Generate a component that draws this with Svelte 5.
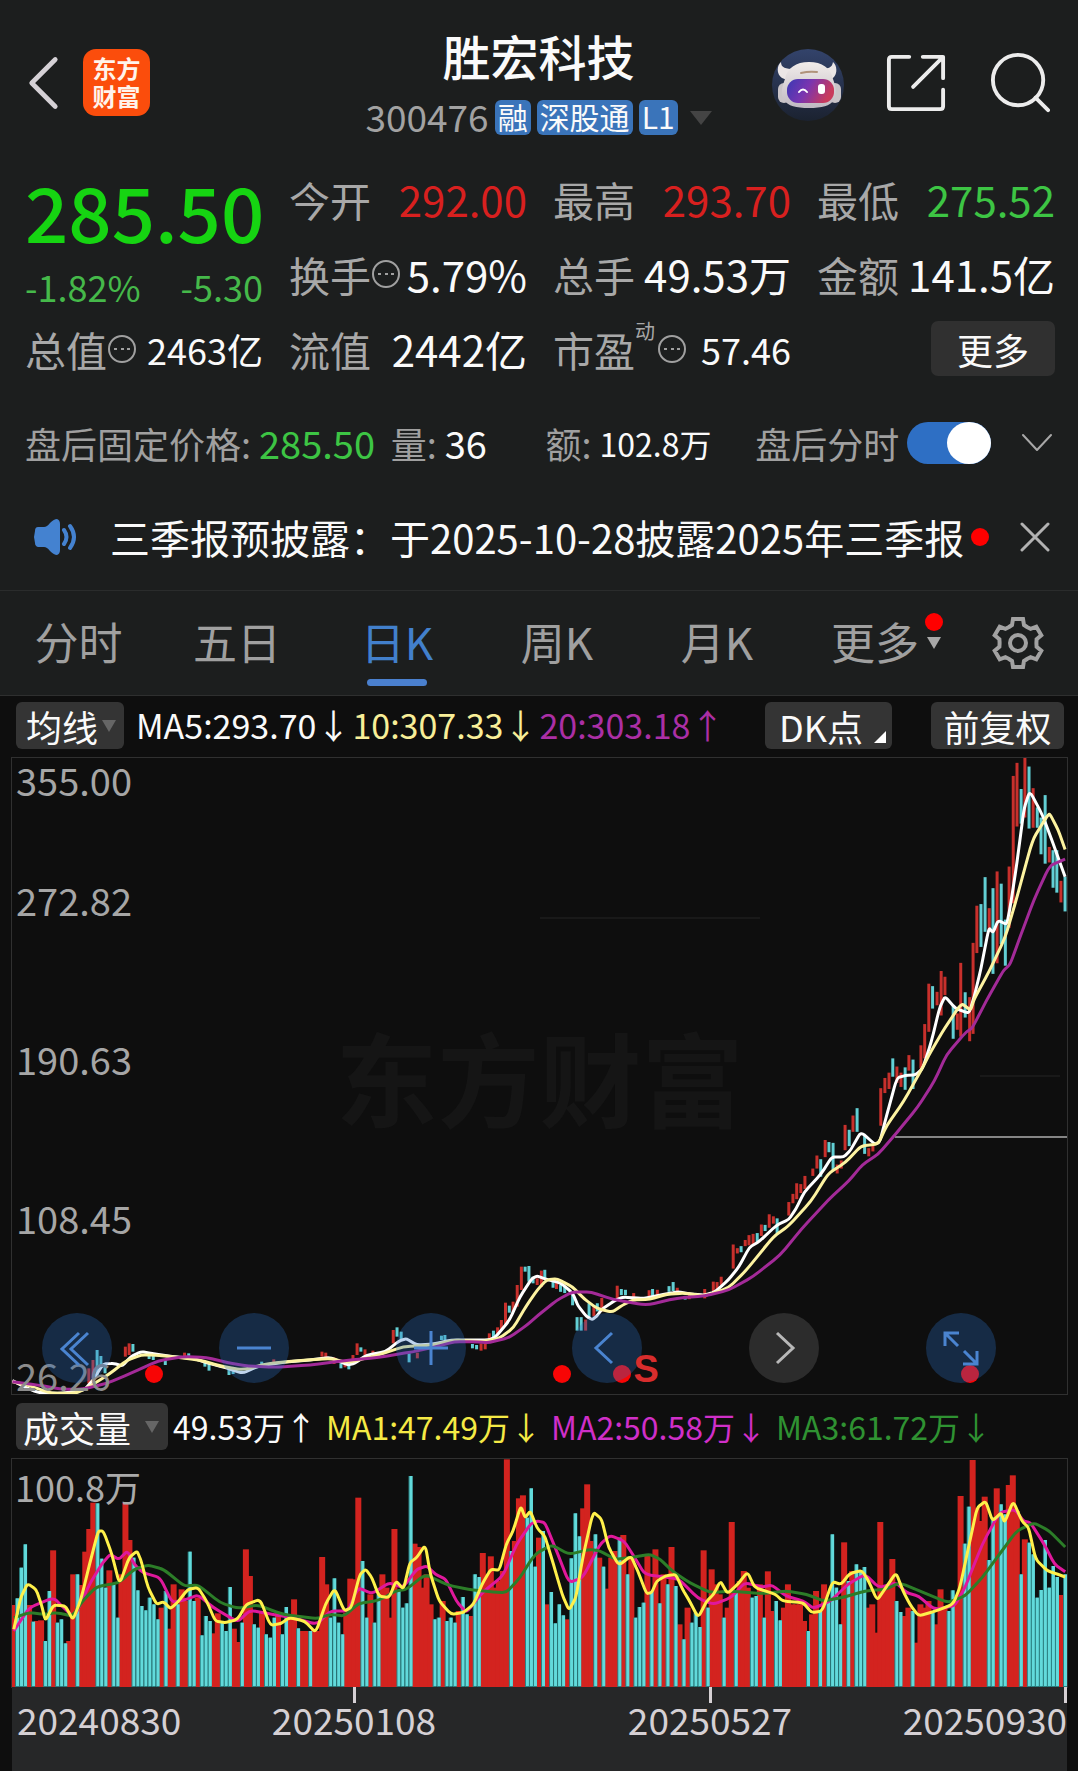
<script>
  let afterHours = $state(true);
  let period = $state('日K');

  const quotes = [
    { label: '今开', value: '292.00', tone: 'up' },
    { label: '最高', value: '293.70', tone: 'up' },
    { label: '最低', value: '275.52', tone: 'down' },
    { label: '换手', value: '5.79%', info: true },
    { label: '总手', value: '49.53万' },
    { label: '金额', value: '141.5亿' },
    { label: '总值', value: '2463亿', info: true, small: true },
    { label: '流值', value: '2442亿' },
    { label: '市盈', value: '57.46', sup: '动', info: true, small: true }
  ];

  const periods = ['分时', '五日', '日K', '周K', '月K'];
  const priceTicks = ['272.82', '190.63', '108.45', '26.26'];
  const dates = ['20240830', '20250108', '20250527', '20250930'];
  const eventDots = [154, 562, 622, 970];

  // Candles: x, high, low, direction
  const leftCandles = '258,385,430,r 270,360,415,r 282,330,405,c 293,348,375,c 305,370,400,c 364,320,350,r 375,310,345,r 386,312,335,c 433,345,357,c 445,345,360,c 480,360,375,c 536,338,350,r 548,340,350,c 595,365,380,c 607,370,392,c 665,385,405,c 677,390,402,c 760,365,375,c 795,358,368,r 935,335,350,r 946,338,352,r 970,352,372,r 990,370,385,c 1002,370,382,r 1013,370,388,c 1025,345,370,r 1037,310,345,r 1048,322,335,c 1060,328,345,r 1083,332,345,r 1142,270,310,r 1153,262,290,c 1165,275,300,c 1188,340,367,c 1212,338,355,r 1282,287,300,c 1292,285,300,c 1372,312,325,c 1384,315,328,c 1397,310,332,r 1409,305,328,r 1421,280,300,r 1433,272,292,c 1445,262,285,r 1456,240,270,r 1468,188,255,r 1479,197,218,c 1490,185,215,r 1502,135,200,r 1514,80,150,r 1525,80,95,c 1536,78,125,c 1548,110,130,c 1560,115,135,r';
  const rightCandles = '4,1300,1340,r 14,1298,1318,c 38,1320,1342,c 48,1330,1345,r 60,1335,1352,c 72,1340,1355,c 95,1355,1385,c 108,1414,1447,c 120,1414,1447,c 133,1420,1447,r 143,1380,1415,c 157,1385,1412,r 167,1380,1400,c 180,1367,1400,r 225,1337,1372,r 237,1345,1360,c 249,1347,1360,c 273,1355,1367,r 318,1348,1365,r 328,1345,1362,c 342,1347,1360,r 376,1338,1352,c 388,1328,1350,c 400,1342,1355,r 423,1362,1371,c 435,1355,1370,r 480,1345,1368,r 505,1327,1350,r 516,1328,1345,r 528,1315,1335,r 563,1236,1295,r 575,1245,1258,r 586,1240,1255,c 598,1225,1240,r 609,1213,1238,r 621,1210,1235,r 633,1208,1230,c 645,1187,1215,r 656,1188,1203,c 668,1162,1195,r 680,1167,1185,r 691,1172,1210,c 725,1132,1165,r 737,1112,1135,r 748,1086,1125,r 760,1088,1110,r 772,1068,1100,r 795,1050,1068,r 807,1018,1050,r 818,1027,1070,c 831,980,1022,r 842,985,1010,c 854,987,1055,c 866,1040,1062,r 878,1030,1050,r 889,943,1005,r 901,955,995,c 912,920,960,r 924,902,960,c 946,970,1014,c 958,1000,1020,r 970,990,1008,r 993,853,945,r 1005,828,865,r 1017,815,855,r 1028,780,825,c 1040,800,840,r 1052,815,850,r 1064,802,857,c 1075,772,810,r 1087,783,855,c 1110,748,805,r 1121,696,780,r 1133,597,715,r 1144,603,658,c 1157,617,650,r 1169,566,675,r 1180,580,625,r 1204,650,732,c 1216,670,710,r 1226,546,727,r 1239,618,680,c 1252,630,738,r 1262,497,720,r 1273,406,522,r 1285,402,507,c 1297,336,470,c 1309,412,470,r 1320,363,573,c 1332,322,547,r 1344,352,500,c 1356,440,553,c 1367,310,460,r 1379,88,400,r 1390,56,212,r 1402,120,205,c 1413,44,190,r 1425,65,217,c 1437,118,215,r 1449,165,215,c 1460,190,280,c 1472,135,303,c 1484,262,300,r 1495,270,362,c 1506,270,374,c 1518,345,398,r 1530,335,420,c';

  const toPoints = (text, ox, oy, sx, sy) =>
    text.split(' ').map((pair) => {
      const [x, y, low, dir] = pair.split(',');
      return { x: ox + x * sx, y: oy + y * sy, low: oy + low * sy, dir };
    });

  const L = [0, 1240, 1 / 2.904, 1 / 3];
  const R = [540, 740, 1 / 2.914, 1 / 2.45];
  const VL = [0, 1440, 1 / 2.904, 1 / 3];
  const VR = [538, 1440, 1 / 2.904, 1 / 3];

  const candles = [...toPoints(leftCandles, ...L), ...toPoints(rightCandles, ...R)];

  // Polyline with slightly rounded corners
  function curve(points) {
    let d = `M${points[0].x.toFixed(1)} ${points[0].y.toFixed(1)}`;
    for (let i = 1; i < points.length - 1; i++) {
      const p = points[i];
      const n = points[i + 1];
      const a = points[i - 1];
      const bx = p.x + (a.x - p.x) * 0.25;
      const by = p.y + (a.y - p.y) * 0.25;
      const cx = p.x + (n.x - p.x) * 0.25;
      const cy = p.y + (n.y - p.y) * 0.25;
      d += `L${bx.toFixed(1)} ${by.toFixed(1)}Q${p.x.toFixed(1)} ${p.y.toFixed(1)} ${cx.toFixed(1)} ${cy.toFixed(1)}`;
    }
    const e = points[points.length - 1];
    return d + `L${e.x.toFixed(1)} ${e.y.toFixed(1)}`;
  }
  const join = (a, A, b, B) => curve([...toPoints(a, ...A), ...toPoints(b, ...B)]);

  const ma5 = join(
    '36,422 70,440 110,458 180,460 245,450 270,420 300,372 330,370 355,378 380,350 410,335 440,340 500,350 560,355 600,368 660,385 705,400 750,378 830,366 900,360 960,352 1010,375 1030,370 1065,345 1120,335 1160,302 1180,296 1210,315 1260,312 1310,300 1370,300 1420,300 1440,290 1480,240 1510,170 1545,115 1560,108', L,
    '20,1322 60,1330 95,1355 110,1385 135,1412 152,1420 165,1412 180,1395 215,1375 240,1365 300,1368 350,1360 400,1352 440,1357 480,1360 510,1352 550,1322 580,1290 610,1243 640,1228 690,1188 725,1175 745,1150 770,1108 820,1062 850,1022 885,1022 905,1005 935,960 975,990 990,985 1010,920 1040,828 1065,822 1095,820 1115,805 1140,740 1165,655 1180,628 1210,657 1250,670 1265,630 1285,560 1308,460 1320,472 1335,442 1360,452 1370,410 1390,300 1410,170 1427,125 1465,185 1500,265 1530,335', R);
  const ma10 = join(
    '36,425 80,435 150,460 220,460 260,440 320,400 370,360 410,345 450,345 500,350 580,360 640,378 705,390 780,370 870,362 960,355 1010,368 1100,345 1170,320 1260,315 1320,300 1400,305 1450,295 1490,265 1530,195 1560,150', L,
    '20,1322 50,1320 95,1340 130,1370 165,1392 210,1402 240,1385 270,1372 320,1370 370,1358 420,1355 480,1362 550,1342 600,1300 680,1217 725,1190 790,1130 840,1062 890,1035 935,995 985,990 1010,945 1060,885 1110,810 1140,762 1180,705 1228,645 1255,662 1265,635 1310,565 1355,485 1385,400 1435,245 1475,190 1485,180 1510,220 1530,268', R);
  const ma20 = join(
    '36,425 110,435 180,448 240,448 310,430 380,400 460,362 530,350 600,352 660,368 720,378 800,382 900,375 1000,362 1100,352 1200,335 1260,322 1320,305 1380,305 1420,308 1480,292 1530,255 1560,228', L,
    '50,1372 95,1352 150,1353 210,1370 310,1385 400,1367 480,1362 550,1348 620,1315 700,1262 760,1200 840,1127 900,1080 940,1040 985,1015 1040,962 1100,900 1150,835 1185,770 1240,717 1260,705 1300,640 1350,565 1370,550 1400,480 1440,390 1485,308 1530,292', R);

  // Volume bars: direction letter followed by the bar top
  const volumes = (
    'r492 c472 c380 c310 r492 c542 r540 r538 c600 c450 r328 c545 c535 c607 r600 r400 c400 r432 r332 r264 r185 c187 c353 c440 r388 c430 c530 r400 r185 r297 c350 c448 c495 c508 c470 c490 c535 r500 c450 r563 r430 c490 r445 r480 c332 c480 r470 c583 c525 c540 r577 r517 c540 c570 c438 r563 r603 c545 r325 r405 c550 c560 r510 c580 c590 c530 r515 c580 c498 r530 r475 c562 r570 r570 c570 r565 r570 r348 r430 c530 c412 c545 c580 r515 r413 r415 r170 c360 c530 r460 c545 c460 r400 r440 r530 r264 c450 c500 c487 c105 r308 r318 r440 r400 r490 c535 c530 r480 c540 c530 c545 r510 c468 c520 r525 c400 c408 r336 r400 r346 r440 r420 r390 r55 c330 r300 r172 r163 c230 c142 c377 r290 ' +
    'c270 r490 c453 c547 c490 c523 r535 c352 c217 c286 r202 r130 r300 c280 r350 c377 r443 r350 r330 c290 r282 c400 r350 c530 c498 c485 r345 c450 r325 c487 r400 c430 r318 c435 r550 c595 r500 c545 c515 c558 r328 c500 r385 r430 r460 c530 r500 r243 c455 r420 r390 r440 c470 c465 r430 c530 r391 r510 c480 c538 r500 r430 r490 r490 r490 r540 c570 r520 r450 c510 r430 c480 c280 c440 c550 r304 c420 r390 c370 c390 c378 r500 r490 r575 r243 r440 r440 r354 c480 c513 r525 r500 c510 r605 r490 r500 r480 c515 r550 r445 r495 c510 c448 r480 r165 c308 c197 r57 r200 r240 r167 c357 c230 r142 c190 c220 r132 r103 r210 c400 r295 c305 c340 c470 c447 c297 c440 c375 c408 r462 c400'
  ).split(' ').map((v, i, all) => ({
    dir: v[0],
    x: 13 + (i * 1052) / (all.length - 1),
    y: 1440 + Number(v.slice(1)) / 3
  }));
  const rising = volumes.filter((v) => v.dir === 'r');
  const falling = volumes.filter((v) => v.dir === 'c');

  const vma1 = join(
    '40,565 60,470 80,428 105,445 120,490 132,540 155,492 190,495 212,537 235,475 260,370 285,270 300,270 325,340 347,430 375,350 398,330 410,360 430,440 455,490 475,482 495,503 515,485 545,445 575,440 600,480 625,540 655,545 690,535 715,490 755,475 785,553 815,548 840,530 885,540 917,575 945,490 972,442 1000,510 1020,500 1045,400 1062,385 1080,410 1100,465 1130,470 1150,420 1172,445 1190,365 1210,350 1235,312 1250,400 1275,480 1310,520 1345,515 1375,490 1400,430 1425,385 1450,388 1470,310 1490,270 1512,195 1525,230 1540,210 1560,262', VL,
    '20,285 45,370 70,460 90,508 110,470 130,350 160,212 185,235 205,320 235,373 270,345 290,390 315,458 330,455 345,420 370,405 400,400 420,445 440,480 465,530 490,480 510,460 530,420 550,458 580,430 608,393 630,440 690,460 710,480 770,485 795,515 825,510 855,422 880,430 905,398 940,388 960,420 985,478 1010,440 1040,395 1060,450 1080,490 1105,525 1155,510 1205,490 1225,440 1250,320 1275,200 1300,180 1320,240 1345,215 1355,245 1380,180 1405,240 1425,260 1445,355 1480,390 1510,400 1531,408', VR);
  const vma2 = join(
    '40,570 85,500 155,470 185,500 215,530 260,430 295,370 320,340 345,355 370,330 390,370 415,395 465,410 500,485 540,475 575,462 620,500 690,543 725,508 790,520 850,530 920,550 960,510 1010,510 1040,440 1080,458 1130,425 1170,440 1210,385 1240,375 1265,400 1295,415 1325,480 1355,515 1400,455 1460,405 1500,310 1540,250 1560,240', VL,
    '20,245 50,320 90,425 130,410 180,310 210,283 250,300 275,340 310,400 380,410 410,415 465,472 510,490 560,470 600,425 650,438 680,432 720,465 770,480 800,502 850,480 900,430 950,400 990,440 1040,425 1070,455 1105,465 1150,505 1210,495 1240,440 1290,310 1340,215 1385,205 1410,240 1430,245 1470,310 1500,370 1531,392', VR);
  const vma3 = join(
    '40,530 85,515 130,520 165,515 210,525 240,480 280,437 345,425 390,385 430,372 475,385 535,435 575,432 640,485 690,502 750,492 820,520 920,533 960,520 1000,525 1040,488 1100,478 1150,450 1180,445 1235,400 1300,432 1360,445 1420,452 1470,455 1510,410 1540,360 1560,335', VL,
    '40,312 90,340 150,325 180,330 225,355 280,348 325,340 355,355 390,390 440,425 500,455 560,450 650,458 720,450 780,460 830,480 890,468 950,450 1010,445 1050,425 1120,455 1190,485 1240,465 1290,410 1340,340 1390,270 1440,245 1485,270 1531,318', VR);

  const gear = Array.from({ length: 6 }, (_, k) => {
    const a = (k * Math.PI) / 3;
    return [[-9, -16], [-6, -18], [-5, -24], [5, -24], [6, -18], [9, -16]].map(([x, y]) =>
      `${(x * Math.cos(a) - y * Math.sin(a)).toFixed(1)},${(x * Math.sin(a) + y * Math.cos(a)).toFixed(1)}`
    ).join(' ');
  }).join(' ');
</script>

{#snippet infoIcon()}
  <svg class="info" viewBox="0 0 30 30" aria-hidden="true">
    <circle cx="15" cy="15" r="13" />
    <path d="M7 15h3M14 15h3M20 15h3" />
  </svg>
{/snippet}

<main>
  <div class="top">
    <header>
      <div class="side">
        <button class="icon back" aria-label="返回">
          <svg viewBox="0 0 34 58"><path d="M30 4 5 29l25 25" /></svg>
        </button>
        <a class="logo" href="#home">东方<br />财富</a>
      </div>
      <div class="title">
        <h1>胜宏科技</h1>
        <button class="code">
          <span class="num">300476</span>
          <span class="tag">融</span><span class="tag">深股通</span><span class="tag">L1</span>
          <i class="caret"></i>
        </button>
      </div>
      <div class="side right">
        <button class="icon robot" aria-label="智能助手">
          <svg viewBox="760 35 100 90">
            <defs>
              <linearGradient id="visor" x1="0" x2="1" y1="0" y2="0.3">
                <stop offset="0" stop-color="#3a39b4" />
                <stop offset="0.5" stop-color="#7a35b0" />
                <stop offset="1" stop-color="#c83a5c" />
              </linearGradient>
              <linearGradient id="halo" x1="0" x2="0" y1="0" y2="1">
                <stop offset="0" stop-color="#33436b" />
                <stop offset="1" stop-color="#1b2230" />
              </linearGradient>
              <linearGradient id="shell" x1="0" x2="0" y1="0" y2="1">
                <stop offset="0" stop-color="#f1ecea" />
                <stop offset="1" stop-color="#bfb9c2" />
              </linearGradient>
            </defs>
            <circle cx="808" cy="82" r="36" fill="url(#halo)" />
            <rect x="778" y="80" width="12" height="20" rx="6" fill="#c9c4c8" />
            <rect x="829" y="80" width="12" height="20" rx="6" fill="#c9c4c8" />
            <path d="M781 59c-4 3-5 12 1 16l5 2 7-11c-8 0-13-1-13-7zM833 59c4 3 5 12 0 16l-6 2-7-11c8 0 12-1 13-7z" fill="#ebe6e6" />
            <path d="M785 76c2-11 11-17 24-17s22 6 24 17c3 8 4 16 1 21-4 6-12 8-25 8s-21-2-25-8c-4-5-2-13 1-21z" fill="url(#shell)" />
            <rect x="787" y="76" width="47" height="24" rx="11" fill="url(#visor)" />
            <path d="M801 70q8-2 16-1" stroke="#b0937b" stroke-width="2" fill="none" />
            <path d="M799 89q4-5 8 0" stroke="#fff" stroke-width="2" fill="none" />
            <rect x="818" y="81" width="7" height="10" rx="3" fill="#fff" />
          </svg>
        </button>
        <button class="icon share" aria-label="分享">
          <svg viewBox="0 0 62 62"><path d="M24 4H6q-3 0-3 3v48q0 3 3 3h50q3 0 3-3V38M38 4h21v22M58 5 28 35" /></svg>
        </button>
        <button class="icon search" aria-label="搜索">
          <svg viewBox="0 0 62 62"><circle cx="29" cy="28" r="26" /><path d="m47 46 13 13" /></svg>
        </button>
      </div>
    </header>

    <section class="quote">
      <div class="last">
        <strong>285.50</strong>
        <div class="change"><span>-1.82%</span><span>-5.30</span></div>
      </div>
      {#each quotes as q}
        <div class="cell">
          <span class="label">{q.label}</span>
          {#if q.sup}<sup>{q.sup}</sup>{/if}
          {#if q.info}{@render infoIcon()}{/if}
          <span class={['value', q.tone, q.small && 'small']}>{q.value}</span>
        </div>
      {/each}
      <div class="cell end"><button class="more">更多</button></div>
    </section>

    <section class="after">
      <div>盘后固定价格: <b class="down">285.50</b></div>
      <div>量: <b>36</b></div>
      <div>额: <b class="small">102.8万</b></div>
      <label>盘后分时<input type="checkbox" role="switch" bind:checked={afterHours} /></label>
      <button class="icon expand" aria-label="展开">
        <svg viewBox="0 0 30 20"><path d="M1 2 15 17 29 2" /></svg>
      </button>
    </section>

    <section class="notice">
      <svg class="speaker" viewBox="0 0 46 38" aria-hidden="true">
        <path d="M6 9h6q3 0 6-4 4-4 7-4 3 1 3 5v26q0 4-3 5-3 0-7-4-3-4-6-4H6q-3-1-3-4l-1-6 1-6q0-4 3-4z" fill="#4482d0" />
        <path d="M32 12q5 7 0 14M38 8q8 11 0 22" fill="none" stroke="#4482d0" stroke-width="4" stroke-linecap="round" />
      </svg>
      <a href="#notice">三季报预披露：于2025-10-28披露2025年三季报</a>
      <i class="dot"></i>
      <button class="icon close" aria-label="关闭">
        <svg viewBox="0 0 30 30"><path d="M2 2 28 28M28 2 2 28" /></svg>
      </button>
    </section>

    <nav class="tabs">
      {#each periods as p}
        <button class={{ active: period === p }} onclick={() => (period = p)}>{p}</button>
      {/each}
      <button class="moretab">更多<span class="mark"><i class="dot"></i><i class="caret"></i></span></button>
      <button class="gear" aria-label="设置">
        <svg viewBox="-27 -27 54 54"><polygon points={gear} /><circle r="8" /></svg>
      </button>
    </nav>
  </div>

  <div class="legend">
    <button class="chip avg">均线<i class="caret"></i></button>
    <div class="mas">
      <span>MA5:293.70↓</span><span class="yellow">10:307.33↓</span><span class="purple">20:303.18↑</span>
    </div>
    <button class="chip dk">DK点<i class="corner"></i></button>
    <button class="chip adj">前复权</button>
  </div>

  <section class="chart">
    <svg class="plot" viewBox="12 758 1055 636" preserveAspectRatio="none" aria-label="日K线">
      <path d="M895 1137H1067" stroke="#858585" stroke-width="2" />
      <path d="M540 918H760M980 1076H1060" stroke="#191919" stroke-width="2" />
      {#each candles as c}
        <line x1={c.x} x2={c.x} y1={c.y} y2={c.low} stroke={c.dir === 'r' ? '#c8302c' : '#62cfd4'} stroke-width="3" />
      {/each}
      <path class="line" d={ma5} stroke="#ffffff" />
      <path class="line" d={ma10} stroke="#fdf3a0" />
      <path class="line" d={ma20} stroke="#a32a98" />
      {#each eventDots as x}
        <circle cx={x} cy="1374" r="9" fill="#f80505" />
      {/each}
    </svg>
    <div class="watermark">东方财富</div>
    <div class="scale">
      <span class="max">355.00</span>
      {#each priceTicks as t}<span class="tick">{t}</span>{/each}
    </div>
    <div class="controls">
      <button aria-label="最早"><svg viewBox="0 0 70 70"><path d="M37 20 20 36 37 52M46 20 29 36 46 52" /></svg></button>
      <button aria-label="缩小"><svg viewBox="0 0 70 70"><path d="M18 35H52" /></svg></button>
      <button aria-label="放大"><svg viewBox="0 0 70 70"><path d="M18 35H52M35 18V52" /></svg></button>
      <button aria-label="向左">
        <svg viewBox="0 0 70 70"><path d="M40 20 24 35 40 50" /></svg>
        <span class="sell">S</span>
      </button>
      <button class="grey" aria-label="向右"><svg viewBox="0 0 70 70"><path d="M28 20 44 35 28 50" /></svg></button>
      <button aria-label="全屏"><svg viewBox="0 0 70 70"><path d="M19 33V20H33M20 21 32 33M51 38V51H37M50 50 38 38" /></svg></button>
    </div>
  </section>

  <div class="legend volume">
    <button class="chip wide">成交量<i class="caret"></i></button>
    <div class="mas">
      <span>49.53万↑</span><span class="bright">MA1:47.49万↓</span><span class="magenta">MA2:50.58万↓</span><span class="green">MA3:61.72万↓</span>
    </div>
  </div>

  <section class="vol">
    <svg class="plot" viewBox="12 1458 1055 228" preserveAspectRatio="none" aria-label="成交量">
      {#each rising as v}
        <rect x={v.x - 3} y={v.y} width="6" height={1686 - v.y} fill="#d3231f" />
      {/each}
      {#each falling as v}
        <rect x={v.x - 2} y={v.y} width="4" height={1686 - v.y} fill="#2b7f80" />
        <rect x={v.x - 1} y={v.y} width="3" height={1685 - v.y} fill="#62dadb" />
      {/each}
      <path class="line" d={vma2} stroke="#e0189c" />
      <path class="line" d={vma3} stroke="#2c7d28" />
      <path class="line" d={vma1} stroke="#fff04a" />
    </svg>
    <span class="volmax">100.8万</span>
  </section>

  <footer>
    {#each dates as d}<span>{d}</span>{/each}
  </footer>
</main>

<style>
  :global(body) { background: #0e0e0e; }
  main {
    display: flex;
    flex-direction: column;
    min-height: 100vh;
    color: #fafafa;
    background: #0e0e0e;
    font-family: 'Noto Sans CJK SC', 'Noto Sans', sans-serif;
    white-space: nowrap;
  }
  button {
    font: inherit;
    color: inherit;
    background: none;
    border: 0;
    padding: 0;
    cursor: pointer;
  }
  a { color: inherit; text-decoration: none; }
  svg { display: block; }
  .top { background: #1c1e1e; border-bottom: 1px solid #2e2f2f; }

  .caret {
    border: 7px solid transparent;
    border-top: 12px solid #666;
    border-bottom: 0;
  }
  .dot { width: 18px; height: 18px; border-radius: 50%; background: #ff0000; }
  .up { color: #d8201f; }
  .down { color: #3dc544; }

  header {
    display: grid;
    grid-template-columns: 1fr auto 1fr;
    align-items: center;
    padding: 30px 28px 0 27px;
  }
  .side { display: flex; align-items: center; gap: 24px; }
  .right { justify-content: flex-end; gap: 44px; }
  .icon svg { fill: none; stroke: #ececec; stroke-width: 4; stroke-linecap: round; stroke-linejoin: round; }
  .back svg { width: 32px; height: 58px; stroke: #d5d1d6; stroke-width: 5; }
  .logo {
    display: block;
    width: 67px;
    height: 62px;
    padding-top: 5px;
    border-radius: 13px;
    background: #fb4d0c;
    color: #fff4ec;
    font-size: 24px;
    font-weight: 700;
    line-height: 28px;
    text-align: center;
  }
  .title { display: flex; flex-direction: column; align-items: center; gap: 20px; }
  h1 { margin: 0; font-size: 48px; font-weight: 500; line-height: 50px; }
  .code { display: flex; align-items: center; gap: 6px; height: 35px; line-height: 32px; }
  .num { font-size: 37px; line-height: 30px; padding-bottom: 4px; color: #a2a2a2; }
  .tag { padding: 0 3px 3px; border-radius: 6px; background: #3a74ba; font-size: 30px; }
  .code .caret { margin-left: 6px; border-width: 14px 11px 0; border-top-color: #444; }
  .robot svg { width: 100px; height: 90px; stroke: none; }
  .robot { margin: 0 -28px; }
  .share svg, .search svg { width: 60px; height: 60px; }
  .share { margin-left: 10px; }

  .quote {
    display: grid;
    grid-template-columns: repeat(4, minmax(0, 1fr));
    grid-auto-rows: 75px;
    column-gap: 26px;
    padding: 26px 23px 0 25px;
  }
  .last { grid-row: span 2; display: flex; flex-direction: column; }
  .last strong { font-size: 76px; line-height: 98px; color: #16d412; font-weight: 500; }
  .change { display: flex; justify-content: space-between; font-size: 36px; line-height: 54px; color: #45b94a; }
  .cell { display: flex; align-items: center; }
  .label { font-size: 41px; color: #a8a8a8; }
  .value { margin-left: auto; font-size: 42px; font-weight: 400; }
  .value.small { font-size: 36px; }
  sup { align-self: flex-start; font-size: 20px; line-height: 40px; color: #a8a8a8; margin-right: 2px; }
  .info { width: 30px; height: 30px; fill: none; stroke: #a0a0a0; stroke-width: 2; }
  .end { justify-content: flex-end; }
  .more { width: 124px; height: 55px; border-radius: 7px; background: #303030; font-size: 36px; line-height: 50px; }

  .after {
    display: grid;
    grid-template-columns: 366fr 155fr 210fr 267fr auto;
    align-items: center;
    margin-top: 33px;
    padding: 0 26px 0 25px;
    font-size: 36px;
    line-height: 48px;
    color: #a0a0a0;
  }
  .after div, .after label { display: flex; align-items: center; gap: 8px; min-width: 0; }
  .after b { font-size: 38px; font-weight: 400; }
  .after b:not(.down) { color: #fafafa; }
  .after b.small { font-size: 32px; }
  input {
    appearance: none;
    display: flex;
    flex: none;
    width: 84px;
    height: 42px;
    margin: 0;
    border-radius: 21px;
    background: #666;
  }
  input::before { content: ''; width: 44px; height: 42px; border-radius: 50%; background: #fff; }
  input:checked { background: #2e6fc4; justify-content: flex-end; }
  .expand svg { width: 30px; height: 20px; stroke: #a8a8a8; stroke-width: 2; }

  .notice {
    display: flex;
    align-items: center;
    margin-top: 43px;
    padding: 0 28px 26px 32px;
    font-size: 40px;
    line-height: 54px;
    border-bottom: 1px solid #2a2c2c;
  }
  .speaker { width: 46px; height: 38px; margin-right: 32px; }
  .notice .dot { margin-left: auto; margin-right: 31px; }
  .close svg { width: 30px; height: 30px; stroke: #b2b2b2; stroke-width: 3; }

  .tabs { display: grid; grid-template-columns: 157fr repeat(5, 160fr) 121fr; height: 104px; }
  .tabs button { position: relative; font-size: 44px; color: #a0a0a0; padding-bottom: 4px; }
  .tabs .active { color: #4280cc; }
  .tabs .active::after {
    content: '';
    position: absolute;
    left: 50%;
    bottom: 9px;
    width: 60px;
    height: 7px;
    margin-left: -30px;
    border-radius: 4px;
    background: #4a80ce;
  }
  .tabs .moretab { display: flex; align-items: center; justify-content: center; gap: 6px; padding-left: 20px; }
  .mark { display: flex; flex-direction: column; align-items: center; gap: 6px; margin-bottom: 20px; }
  .mark .caret { border-top-color: #a8a8a8; }
  .tabs .gear { display: flex; align-items: center; justify-content: center; padding: 0; }
  .gear svg { width: 54px; height: 54px; fill: none; stroke: #a2a2a2; stroke-width: 4; }

  .legend { display: flex; align-items: center; padding: 6px 14px 9px 16px; font-size: 34px; line-height: 44px; }
  .chip {
    display: flex;
    align-items: center;
    height: 47px;
    padding: 0 10px;
    border-radius: 6px;
    background: #343434;
    font-size: 36px;
  }
  .avg { gap: 4px; padding: 0 8px 0 10px; }
  .chip.wide { gap: 14px; padding: 0 8px 0 7px; margin-right: 5px; width: 152px; font-size: 36px; }
  .mas { display: flex; gap: 2px; margin-left: 12px; padding-bottom: 2px; }
  .volume { padding-top: 9px; font-size: 32px; }
  .volume .mas { gap: 9px; margin-left: 0; }
  .dk { position: relative; margin-left: auto; margin-right: 39px; width: 127px; padding: 0 14px; }
  .corner { position: absolute; right: 6px; bottom: 6px; border: 6px solid #fff; border-left-color: transparent; border-top-color: transparent; }
  .adj { width: 133px; justify-content: center; }
  .yellow { color: #f8ee98; }
  .purple { color: #ab2fa5; }
  .bright { color: #f5ea45; }
  .magenta { color: #d02fc8; }
  .green { color: #2f9232; }

  .chart, .vol { display: grid; margin: 0 11px 0 12px; box-shadow: 0 0 0 1px #303030; }
  .chart > *, .vol > * { grid-area: 1 / 1; min-width: 0; min-height: 0; }
  .plot { width: 100%; z-index: 1; }
  .line { fill: none; stroke-width: 3; stroke-linejoin: round; }
  .watermark { place-self: center; font-size: 102px; line-height: 130px; font-weight: 700; color: #151515; }
  .scale {
    z-index: 2;
    display: grid;
    grid-template-rows: repeat(4, 1fr);
    padding-left: 4px;
    font-size: 38px;
    line-height: 34px;
    color: #a6a6a6;
    justify-items: start;
  }
  .max { grid-area: 1 / 1; line-height: 44px; }
  .tick { grid-column: 1; align-self: end; }
  .tick:nth-child(2) { grid-row: 1; }
  .tick:last-child { color: #8c8c8c; line-height: 38px; }
  .controls {
    z-index: 3;
    align-self: end;
    display: flex;
    justify-content: space-between;
    padding: 0 71px 11px 30px;
  }
  .controls button { position: relative; width: 70px; height: 70px; border-radius: 50%; background: rgba(43, 113, 198, 0.3); }
  .controls svg { width: 70px; height: 70px; fill: none; stroke: #4a84d0; stroke-width: 3; }
  .controls .grey { background: #2c2c2c; }
  .controls .grey svg { stroke: #b8b8b8; }
  .sell { position: absolute; left: 61px; bottom: -6px; font: 700 38px/40px 'Liberation Sans', sans-serif; color: #d82d2d; }
  .volmax { align-self: start; justify-self: start; z-index: 2; padding: 6px 3px; font-size: 36px; line-height: 42px; color: #aaa; }

  footer {
    flex: 1;
    display: grid;
    grid-template-columns: 164fr 356fr 356fr 179fr;
    margin: 0 11px 0 12px;
    background: #262728;
    font-size: 37px;
    line-height: 32px;
    color: #d5d0d4;
  }
  footer span { display: flex; flex-direction: column; align-items: center; min-width: 0; }
  footer span::before { content: ''; width: 3px; height: 16px; background: #d5d0d4; }
  footer span:first-child { align-items: flex-start; padding-left: 5px; }
  footer span:first-child::before { background: none; }
  footer span:last-child { align-items: flex-end; }
</style>
